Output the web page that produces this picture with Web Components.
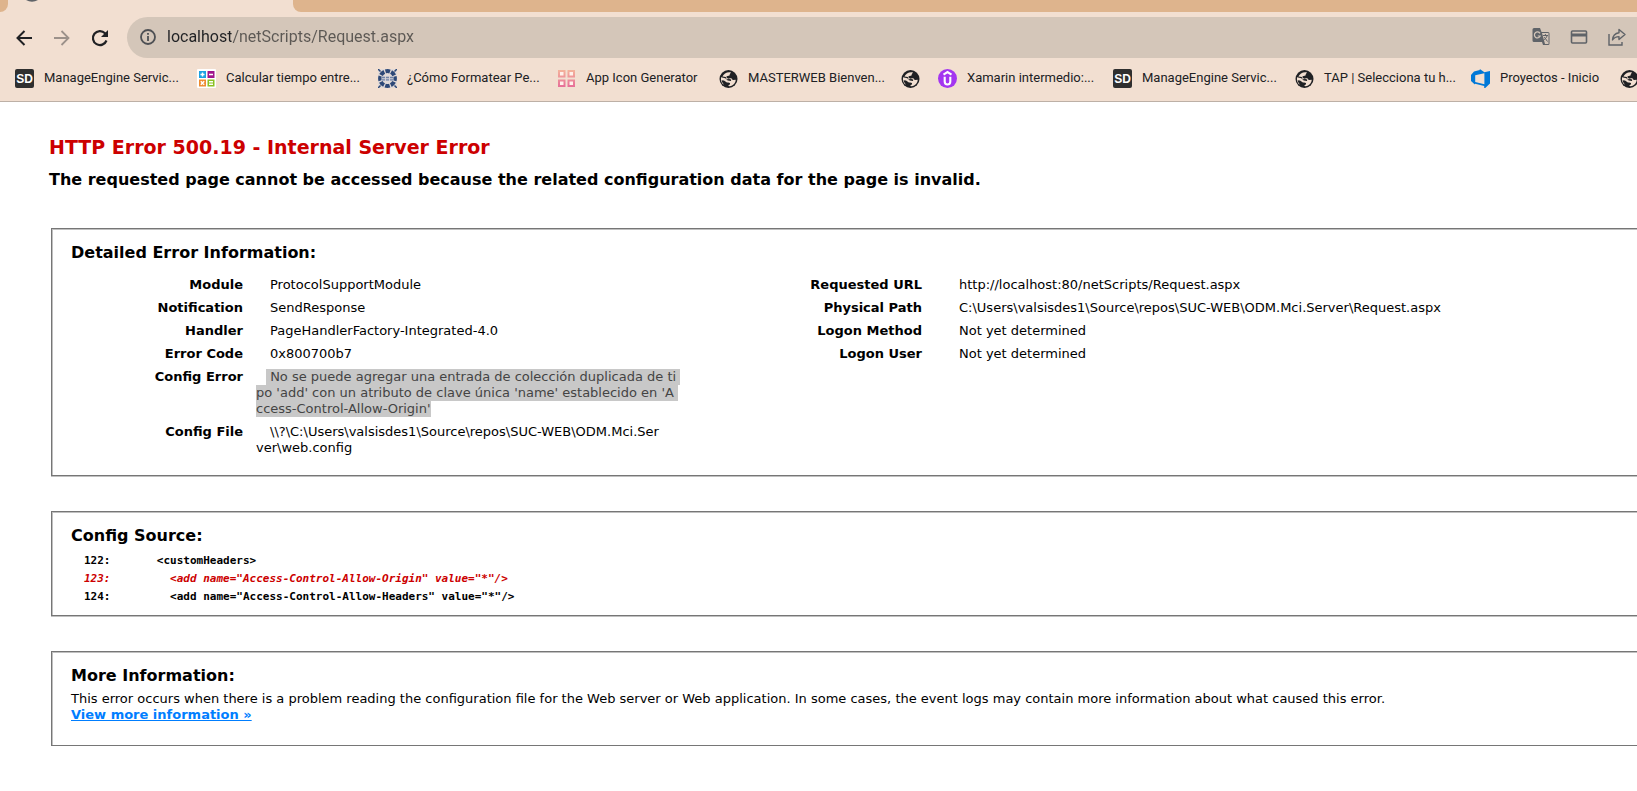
<!DOCTYPE html>
<html lang="en">
<head>
<meta charset="utf-8">
<title>IIS 10.0 Detailed Error - 500.19 - Internal Server Error</title>
<style>
  body { margin: 0; background: #fff; color: #000; font: 13px/16px "DejaVu Sans", Verdana, sans-serif; overflow-x: hidden; }
</style>
</head>
<body>
<browser-chrome>
  <browser-bookmark icon="desk">ManageEngine Servic...</browser-bookmark>
  <browser-bookmark icon="calc">Calcular tiempo entre...</browser-bookmark>
  <browser-bookmark icon="gear">¿Cómo Formatear Pe...</browser-bookmark>
  <browser-bookmark icon="apps">App Icon Generator</browser-bookmark>
  <browser-bookmark icon="globe">MASTERWEB Bienven...</browser-bookmark>
  <browser-bookmark icon="globe" label="Bookmark"></browser-bookmark>
  <browser-bookmark icon="udemy">Xamarin intermedio:...</browser-bookmark>
  <browser-bookmark icon="desk">ManageEngine Servic...</browser-bookmark>
  <browser-bookmark icon="globe">TAP | Selecciona tu h...</browser-bookmark>
  <browser-bookmark icon="devops">Proyectos - Inicio</browser-bookmark>
  <browser-bookmark icon="globe" label="Bookmark"></browser-bookmark>
</browser-chrome>
<error-page>
  <span slot="title">HTTP Error 500.19 - Internal Server Error</span>
  <span slot="summary">The requested page cannot be accessed because the related configuration data for the page is invalid.</span>
  <error-panel heading="Detailed Error Information:"><error-details></error-details></error-panel>
  <error-panel heading="Config Source:"><config-source></config-source></error-panel>
  <error-panel heading="More Information:"><more-information></more-information></error-panel>
</error-page>

<script>
const define = (name, markup, setup) => {
  const template = document.createElement('template');
  template.innerHTML = markup;
  customElements.define(name, class extends HTMLElement {
    constructor() {
      super();
      this.attachShadow({ mode: 'open' }).append(template.content.cloneNode(true));
    }
    connectedCallback() { if (setup) setup(this, this.shadowRoot); }
  });
};

const icons = {
  desk: '<rect width="19" height="19" rx="2" fill="#2f2f2f"/><text x="9.5" y="14" text-anchor="middle" font-family="Liberation Sans, sans-serif" font-weight="700" font-size="12" fill="#fff">SD</text>',
  calc: '<rect width="19" height="19" rx="1" fill="#fff"/><path fill="#1ba1e2" d="M2 2h7v7H2z"/><path fill="#a0148c" d="M10.500 2h7v7h-7z"/><path fill="#ee8a2e" d="M2 10.500h7v7H2z"/><path fill="#8bc122" d="M10.500 10.500h7v7h-7z"/><path fill="none" stroke="#fff" stroke-width="1.500" d="M3.500 5.500h4M5.500 3.500v4M12 5.500h4M3.800 12.300l3.400 3.400M7.200 12.300l-3.400 3.400M12 12.800h4M12 15.300h4"/>',
  gear: '<path fill="#e2dad8" d="M0 0h19v19H0z"/><circle cx="9.5" cy="9.500" r="7.400" fill="none" stroke="#2d4877" stroke-width="4" stroke-dasharray="4.600 1.210" stroke-dashoffset="2.300"/><path stroke="#2d4877" stroke-width="1.5" d="M0 0l2.500 2.500M19 0l-2.500 2.500M0 19l2.500-2.500M19 19l-2.500-2.500"/><path fill="#d5d2d8" d="M3.500 7.300h12v4.700h-12z"/><path fill="none" stroke="#7183a5" stroke-width="1.300" d="M4 8.500h11M4 10.800h11" stroke-dasharray="3 1"/>',
  apps: '<defs><linearGradient id="g" x2="0" y2="19" gradientUnits="userSpaceOnUse"><stop stop-color="#f5b89c"/><stop offset="1" stop-color="#e66a98"/></linearGradient></defs><path d="M2 2h5.5v5.5H2zM11.5 2H17v5.5h-5.5zM2 11.5h5.5V17H2zM11.5 11.5H17V17h-5.5z" fill="#fff0ea" stroke="url(#g)" stroke-width="2"/>',
  globe: '<circle cx="9.5" cy="10" r="9" fill="#202124"/><path fill="#f2dfd1" d="M12 3.300C8 2.600 4.600 4.500 3.400 7.600L6.800 8c1.200.2 1 1.400 2.200 1.600 1.200.2 1.500-.6 3-.4 1.200.2 1 1.700 2.200 1.800l2.500-.2c0 3.200-2.500 6-6 6.400l-1.400-.1c-.3-1.300 1.700-1.200 1.800-2.400.1-1.300-1.600-1.300-3.200-1.300L5 11.600l-2.500-.3c.5 2 1.500 3.500 2.600 4.300L3.600 15A8 8 0 0 1 2 8.200l4.300 1 2.400 2.400 3.300.4.200-1.400-2-.6-2.400.2-1-1.400 1-1.500 2.700-.7.300-1.300z"/>',
  udemy: '<circle cx="9.5" cy="9.5" r="9.5" fill="#a435f0"/><path d="M5.500 5.600l4-2.600 4 2.600M6.700 7.800v4.700a2.800 3 0 0 0 5.600 0V7.800" fill="none" stroke="#fff" stroke-width="2.100"/>',
  devops: '<path fill="#0078d7" d="M0 6l3-3.500L8.800 1V0l4.600 3.200L19 2v12.500L14.200 19l-1-.1V17L4 14.700l-.2.800L0 12z"/><path fill="#f2dfd1" d="M4.200 6.200l9.200-2v11L4.200 13z"/>'
};

define('browser-bookmark', `
  <style>
    :host { display: block; min-width: 0; }
    a { display: flex; align-items: center; gap: 10px; color: #202124; text-decoration: none; white-space: nowrap; }
    svg { flex: none; display: block; }
  </style>
  <a href="#"><svg width="19" height="19" viewBox="0 0 19 19"></svg><slot></slot></a>`,
  (host, root) => {
    root.querySelector('svg').innerHTML = icons[host.getAttribute('icon')];
    if (host.hasAttribute('label')) root.querySelector('a').setAttribute('aria-label', host.getAttribute('label'));
  });

define('tab-strip', `
  <style>
    :host { display: flex; height: 12px; }
    i { background: #deb48d; }
    .before { width: 8px; border-radius: 0 0 8px 0; }
    .tab { width: 285px; box-sizing: border-box; padding-left: 16px; }
    .tab svg { display: block; }
    .after { flex: 1; border-radius: 0 0 0 8px; }
  </style>
  <i class="before"></i><div class="tab"><svg width="16" height="4"><path d="M2 0h12Q8 3.500 2 0z" fill="#5f6368"/></svg></div><i class="after"></i>`);

define('address-bar', `
  <style>
    :host { display: flex; align-items: center; flex: 1; height: 41px; box-sizing: border-box; padding: 0 11px 2px 12px; background: #d4c6b9; border-radius: 21px 0 0 21px; }
    button { flex: none; display: block; border: 0; padding: 0; background: none; color: #5f6368; }
    svg { display: block; }
    input { flex: 1; min-width: 0; border: 0; outline: 0; padding: 0 0 0 10px; height: 30px;
      font: 16px/30px Roboto, "Segoe UI", sans-serif; color: #202124;
      background: linear-gradient(90deg, #202124 74px, #5c5854 74px); -webkit-background-clip: text; background-clip: text; -webkit-text-fill-color: transparent; }
    nav { display: flex; gap: 20px; }
  </style>
  <button aria-label="Site information"><svg width="18" height="18" viewBox="0 0 18 18" fill="none" stroke="#4e5054" stroke-width="1.8"><circle cx="9" cy="9" r="7"/><path d="M9 8v5M9 5v1.800"/></svg></button>
  <input type="text" aria-label="Address" value="localhost/netScripts/Request.aspx">
  <nav>
    <button aria-label="Translate"><svg width="18" height="18" viewBox="0 0 18 18"><path fill="#5f6368" d="M2 0h6l1.500 4H16a1.500 1.500 0 0 1 1.500 1.500v10A1.500 1.500 0 0 1 16 17h-5l-1-3H2a1.500 1.500 0 0 1-1.500-1.500v-11A1.500 1.500 0 0 1 2 0z"/><path fill="#d4c6b9" d="M10 5l3 11h3.500V5z"/><path d="M8 5.400A3 3 0 1 0 8.200 8H5.800" fill="none" stroke="#d4c6b9" stroke-width="1.200"/><path d="M11 7.500h5M13.400 6v1.500M15 8c-.5 2-2 3-3 3.800M12.300 9l3.200 4.500" fill="none" stroke="#5f6368"/></svg></button>
    <button aria-label="Payment methods"><svg width="18" height="18" viewBox="0 0 18 18" fill="none" stroke="#5f6368"><rect x="1.500" y="3" width="15" height="12" rx="1" stroke-width="1.600"/><path d="M1 7h16" stroke-width="3"/></svg></button>
    <button aria-label="Share"><svg width="18" height="18" viewBox="0 0 18 18" fill="none" stroke="#5f6368" stroke-width="1.400"><path d="M1 6v11h13v-3"/><path d="M11 1.500l6 5-6 5V8.600c-3 0-5 1-6.500 3.400.3-4 2.500-6.800 6.500-7.300z" stroke-linejoin="round"/></svg></button>
  </nav>`);

define('browser-chrome', `
  <style>
    :host { display: block; overflow: hidden; background: #f2dfd1; border-bottom: 1px solid #bdb0a6; }
    .toolbar { display: flex; align-items: center; padding: 5px 0 0 13px; }
    .toolbar button { border: 0; background: none; padding: 0; margin-right: 18px; width: 20px; height: 20px; }
    .toolbar svg { display: block; }
    .bookmarks { display: grid; grid-template-columns: 182px 181px 179px 162px 182px 37px 175px 182px 176px 149px 32px; align-items: center; height: 43px; box-sizing: border-box; padding: 0 0 3px 15px; font: 13px/18px Roboto, "Segoe UI", sans-serif; }
  </style>
  <tab-strip></tab-strip>
  <div class="toolbar">
    <button aria-label="Back"><svg width="20" height="20" viewBox="0 0 20 20" fill="none" stroke="#202124" stroke-width="2"><path d="M19 10H5M11.500 3L4.500 10l7 7"/></svg></button>
    <button aria-label="Forward"><svg width="20" height="20" viewBox="0 0 20 20" fill="none" stroke="#9c918a" stroke-width="1.800"><path d="M3 10h14M10.500 3l7 7-7 7"/></svg></button>
    <button aria-label="Reload"><svg width="20" height="20" viewBox="0 0 20 20"><path d="M17.500 12.500A7 7 0 1 1 16 5.200l1.500 1.800" fill="none" stroke="#202124" stroke-width="2.200"/><path d="M19 2v7h-7z" fill="#202124"/></svg></button>
    <address-bar></address-bar>
  </div>
  <nav class="bookmarks"><slot></slot></nav>`);

define('error-page', `
  <style>
    :host { display: block; padding: 32px 0 0 49px; }
    h1 { margin: 0; font-size: 19px; line-height: 26px; color: #c00; }
    h2 { margin: 0; padding: 10px 0 38px; font-size: 16px; line-height: 20px; }
    main { display: grid; gap: 35px; padding-left: 2px; }
  </style>
  <h1><slot name="title"></slot></h1>
  <h2><slot name="summary"></slot></h2>
  <main><slot></slot></main>`);

define('error-panel', `
  <style>
    :host { display: block; }
    section { border: 1px solid #767676; border-right: 0; box-shadow: inset 1px 1px #c0c0c0, 0 1px #c0c0c0; padding: 14px 0 0 19px; }
    h3 { margin: 0; font-size: 16px; line-height: 20px; }
  </style>
  <section><h3></h3><slot></slot></section>`,
  (host, root) => { root.querySelector('h3').textContent = host.getAttribute('heading'); });

define('error-details', String.raw`
  <style>
    :host { display: grid; grid-template-columns: 47% 1fr; align-items: start; padding: 11px 0 15px; }
    table { border-collapse: collapse; }
    th, td { padding: 3px 0 4px; vertical-align: top; }
    th { width: 172px; text-align: right; font-weight: 700; }
    .request th { width: 115px; }
    td { padding-left: 13px; text-indent: 14px; white-space: nowrap; }
    .request td { padding-left: 23px; }
    .selected { text-indent: 10px; }
    mark { background: #c8c8c8; color: #444; padding-bottom: 1px; }
  </style>
  <table class="module">
    <tr><th scope="row">Module</th><td>ProtocolSupportModule</td></tr>
    <tr><th scope="row">Notification</th><td>SendResponse</td></tr>
    <tr><th scope="row">Handler</th><td>PageHandlerFactory-Integrated-4.0</td></tr>
    <tr><th scope="row">Error Code</th><td>0x800700b7</td></tr>
    <tr><th scope="row">Config Error</th><td class="selected"><mark>&nbsp;No se puede agregar una entrada de colección duplicada de ti&nbsp;<br>po 'add' con un atributo de clave única 'name' establecido en 'A&nbsp;<br>ccess-Control-Allow-Origin'</mark></td></tr>
    <tr><th scope="row">Config File</th><td>\\?\C:\Users\valsisdes1\Source\repos\SUC-WEB\ODM.Mci.Ser<br>ver\web.config</td></tr>
  </table>
  <table class="request">
    <tr><th scope="row">Requested URL</th><td>http://localhost:80/netScripts/Request.aspx</td></tr>
    <tr><th scope="row">Physical Path</th><td>C:\Users\valsisdes1\Source\repos\SUC-WEB\ODM.Mci.Server\Request.aspx</td></tr>
    <tr><th scope="row">Logon Method</th><td>Not yet determined</td></tr>
    <tr><th scope="row">Logon User</th><td>Not yet determined</td></tr>
  </table>`);

define('config-source', `
  <style>
    :host { display: block; padding: 6px 0 9px 13px; }
    pre { margin: 0; font: 700 11px/18px "DejaVu Sans Mono", Consolas, monospace; }
    em { color: #c00; }
  </style>
  <pre>122:       &lt;customHeaders&gt;
<em>123:         &lt;add name="Access-Control-Allow-Origin" value="*"/&gt;</em>
124:         &lt;add name="Access-Control-Allow-Headers" value="*"/&gt;</pre>`);

define('more-information', `
  <style>
    :host { display: block; padding: 5px 0 22px; }
    p { margin: 0; }
    a { color: #007eff; font-weight: 700; }
  </style>
  <p>This error occurs when there is a problem reading the configuration file for the Web server or Web application. In some cases, the event logs may contain more information about what caused this error.<br><a href="#">View more information »</a></p>`);
</script>
</body>
</html>
